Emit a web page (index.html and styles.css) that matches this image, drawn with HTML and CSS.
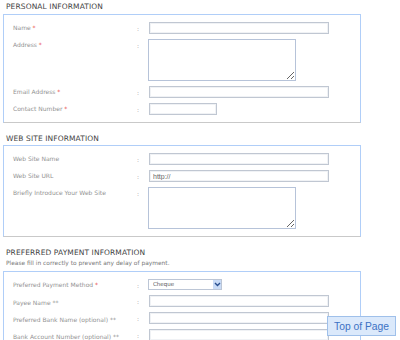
FILE: index.html
```html
<!DOCTYPE html>
<html lang="en">
<head>
  <meta charset="UTF-8" />
  <title>Advertiser Sign Up</title>
  <link rel="stylesheet" href="styles.css">
</head>
<body>
  <div class="page">
    <h2 class="section-title first">PERSONAL INFORMATION</h2>
    <div class="form-box">
      <div class="form-row">
        <label>Name <span class="req">*</span></label>
        <span class="colon">:</span>
        <input type="text" class="field">
      </div>
      <div class="form-row">
        <label>Address <span class="req">*</span></label>
        <span class="colon">:</span>
        <textarea class="area"></textarea>
      </div>
      <div class="form-row">
        <label>Email Address <span class="req">*</span></label>
        <span class="colon">:</span>
        <input type="text" class="field">
      </div>
      <div class="form-row">
        <label>Contact Number <span class="req">*</span></label>
        <span class="colon">:</span>
        <input type="text" class="field short">
      </div>
    </div>

    <h2 class="section-title">WEB SITE INFORMATION</h2>
    <div class="form-box">
      <div class="form-row">
        <label>Web Site Name</label>
        <span class="colon">:</span>
        <input type="text" class="field">
      </div>
      <div class="form-row">
        <label>Web Site URL</label>
        <span class="colon">:</span>
        <input type="text" class="field" value="http://">
      </div>
      <div class="form-row">
        <label>Briefly Introduce Your Web Site</label>
        <span class="colon">:</span>
        <textarea class="area"></textarea>
      </div>
    </div>

    <h2 class="section-title">PREFERRED PAYMENT INFORMATION</h2>
    <p class="note">Please fill in correctly to prevent any delay of payment.</p>
    <div class="form-box">
      <div class="form-row">
        <label>Preferred Payment Method <span class="req">*</span></label>
        <span class="colon">:</span>
        <div class="select-wrap">
          <select class="select">
            <option>Cheque</option>
            <option>Bank Transfer</option>
          </select>
          <span class="select-arrow">
            <svg width="7" height="5" viewBox="0 0 7 5"><path d="M1 1 L3.5 3.5 L6 1" fill="none" stroke="#2a4f8f" stroke-width="1.4"/></svg>
          </span>
        </div>
      </div>
      <div class="form-row">
        <label class="mid">Payee Name **</label>
        <span class="colon">:</span>
        <input type="text" class="field">
      </div>
      <div class="form-row">
        <label class="mid">Preferred Bank Name (optional) **</label>
        <span class="colon">:</span>
        <input type="text" class="field">
      </div>
      <div class="form-row">
        <label class="mid">Bank Account Number (optional) **</label>
        <span class="colon">:</span>
        <input type="text" class="field">
      </div>
    </div>
  </div>

  <a href="#" class="top-link">Top of Page</a>
</body>
</html>
```

FILE: styles.css
```css
body {
  margin: 0;
  background: #fff;
  font-family: "DejaVu Sans", Verdana, sans-serif;
  color: #333;
}

.page {
  width: 358px;
  padding-left: 3px;
}

/* Section headings */
.section-title {
  font-size: 7.5px;
  font-weight: normal;
  line-height: 10px;
  letter-spacing: 0.1px;
  margin: 11px 0 1px;
  padding-left: 3px;
  color: #444;
}
.section-title.first {
  margin-top: 2px;
  margin-bottom: 2px;
}

.note {
  font-size: 5.9px;
  line-height: 9px;
  margin: 1px 0 3px;
  padding-left: 3px;
  color: #777;
}

/* Bordered form blocks */
.form-box {
  border: 1px solid #b0cef8;
  border-bottom-color: #c9c9c9;
  padding: 7px 9px 7px;
  display: flex;
  flex-direction: column;
  gap: 5px;
}

.form-row {
  display: grid;
  grid-template-columns: 124px 12px 1fr;
  align-items: start;
}

.form-row label {
  font-size: 6px;
  line-height: 8px;
  color: #939393;
  padding-top: 2px;
}
.form-row label.mid {
  padding-top: 4px;
}

.req {
  color: #e84848;
}

.colon {
  font-size: 6px;
  line-height: 8px;
  color: #999;
  padding-top: 3px;
}

.field {
  box-sizing: border-box;
  width: 180px;
  height: 12px;
  margin: 0;
  padding: 0 3px;
  border: 1px solid #c0c7d2;
  box-shadow: inset 0 0 0 1px #f0f2f5;
  font-family: "Liberation Sans", Arial, sans-serif;
  font-size: 7px;
  color: #666;
  outline: none;
}
.field.short {
  width: 68px;
}

.area {
  box-sizing: border-box;
  width: 148px;
  height: 42px;
  margin: 0 0 0 -1px;
  padding: 2px;
  border: 1px solid #b6c3d9;
  font-size: 7px;
  outline: none;
}

.select-wrap {
  position: relative;
  display: flex;
  width: 74px;
  height: 11px;
  margin-left: -1px;
}

.select {
  appearance: none;
  -webkit-appearance: none;
  box-sizing: border-box;
  width: 74px;
  height: 11px;
  margin: 0;
  padding: 0 0 0 4px;
  border: 1px solid #bcc6d6;
  border-radius: 0;
  background: #fff;
  font-family: "DejaVu Sans", Verdana, sans-serif;
  font-size: 5.5px;
  line-height: 9px;
  color: #555;
  outline: none;
}

.select-arrow {
  position: absolute;
  top: 1px;
  right: 1px;
  width: 8px;
  height: 9px;
  background: #c9dbf6;
  display: flex;
  align-items: center;
  justify-content: center;
  pointer-events: none;
}

/* Floating back-to-top link */
.top-link {
  position: fixed;
  right: 4px;
  bottom: 4px;
  width: 69px;
  height: 20px;
  box-sizing: border-box;
  display: flex;
  align-items: center;
  justify-content: center;
  background: #dbe9fb;
  border: 1px solid #9fc0ea;
  font-family: "Liberation Sans", Arial, sans-serif;
  font-size: 10.3px;
  color: #3d72c4;
  text-decoration: none;
}
```
